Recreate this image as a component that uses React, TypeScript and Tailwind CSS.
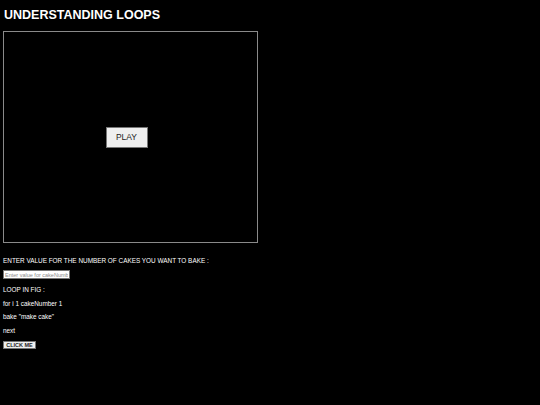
import React from "react";

const App = () => {
  return (
    <div
      className="w-[540px] h-[405px] bg-black text-white overflow-hidden"
      style={{ fontFamily: '"Liberation Sans", Arial, sans-serif' }}
    >
      <div className="pl-[4px] pt-[8px]">
        <h1 className="text-[12.5px] font-bold leading-[15px]">
          UNDERSTANDING LOOPS
        </h1>
      </div>
      <div className="ml-[3px] mt-[8px] w-[255px] h-[212px] border border-[#8a8a8a] flex items-center justify-center">
        <button className="mr-[8px] w-[42px] h-[21px] bg-[#efefef] border border-[#767676] text-[#222] text-[8.5px] mt-[1px]">
          PLAY
        </button>
      </div>
      <div className="pl-[3px] pt-[14px] text-[6.4px] leading-[8px]">
        <p>ENTER VALUE FOR THE NUMBER OF CAKES YOU WANT TO BAKE :</p>
        <input
          className="mt-[5px] block w-[67px] h-[9px] bg-white border border-[#767676] text-black text-[5.5px] px-[1px] placeholder:text-[#8a8a8a]"
          placeholder="Enter value for cakeNumber"
        />
        <p className="mt-[7px]">LOOP IN FIG :</p>
        <p className="mt-[5.5px]">for i 1 cakeNumber 1</p>
        <p className="mt-[5.5px]">bake "make cake"</p>
        <p className="mt-[5.5px]">next</p>
        <button className="mt-[6px] block w-[33px] h-[8px] bg-[#efefef] border border-[#767676] text-[#222] text-[5.5px] leading-[6px] font-bold">
          CLICK ME
        </button>
      </div>
    </div>
  );
};

export default App;
